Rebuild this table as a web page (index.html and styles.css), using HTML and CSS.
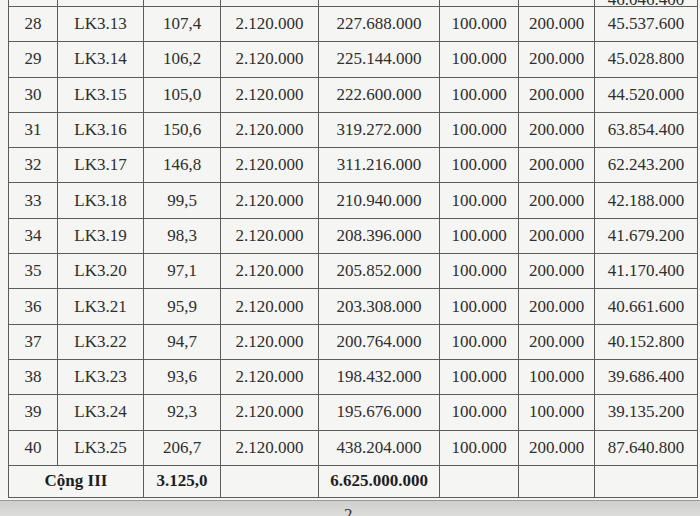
FILE: index.html
```html
<!DOCTYPE html>
<html lang="vi">
<head>
<meta charset="utf-8">
<title>Bảng LK3</title>
<link rel="stylesheet" href="styles.css">
</head>
<body>
<div class="page">
  <table class="grid">
    <colgroup>
      <col class="c1"><col class="c2"><col class="c3"><col class="c4">
      <col class="c5"><col class="c6"><col class="c7"><col class="c8">
    </colgroup>
    <tbody>
      <tr class="cut"><td></td><td></td><td></td><td></td><td></td><td></td><td></td><td class="low">46.046.400</td></tr>
      <tr><td>28</td><td>LK3.13</td><td>107,4</td><td>2.120.000</td><td>227.688.000</td><td>100.000</td><td>200.000</td><td>45.537.600</td></tr>
      <tr><td>29</td><td>LK3.14</td><td>106,2</td><td>2.120.000</td><td>225.144.000</td><td>100.000</td><td>200.000</td><td>45.028.800</td></tr>
      <tr><td>30</td><td>LK3.15</td><td>105,0</td><td>2.120.000</td><td>222.600.000</td><td>100.000</td><td>200.000</td><td>44.520.000</td></tr>
      <tr><td>31</td><td>LK3.16</td><td>150,6</td><td>2.120.000</td><td>319.272.000</td><td>100.000</td><td>200.000</td><td>63.854.400</td></tr>
      <tr><td>32</td><td>LK3.17</td><td>146,8</td><td>2.120.000</td><td>311.216.000</td><td>100.000</td><td>200.000</td><td>62.243.200</td></tr>
      <tr><td>33</td><td>LK3.18</td><td>99,5</td><td>2.120.000</td><td>210.940.000</td><td>100.000</td><td>200.000</td><td>42.188.000</td></tr>
      <tr><td>34</td><td>LK3.19</td><td>98,3</td><td>2.120.000</td><td>208.396.000</td><td>100.000</td><td>200.000</td><td>41.679.200</td></tr>
      <tr><td>35</td><td>LK3.20</td><td>97,1</td><td>2.120.000</td><td>205.852.000</td><td>100.000</td><td>200.000</td><td>41.170.400</td></tr>
      <tr><td>36</td><td>LK3.21</td><td>95,9</td><td>2.120.000</td><td>203.308.000</td><td>100.000</td><td>200.000</td><td>40.661.600</td></tr>
      <tr><td>37</td><td>LK3.22</td><td>94,7</td><td>2.120.000</td><td>200.764.000</td><td>100.000</td><td>200.000</td><td>40.152.800</td></tr>
      <tr><td>38</td><td>LK3.23</td><td>93,6</td><td>2.120.000</td><td>198.432.000</td><td>100.000</td><td>100.000</td><td>39.686.400</td></tr>
      <tr><td>39</td><td>LK3.24</td><td>92,3</td><td>2.120.000</td><td>195.676.000</td><td>100.000</td><td>100.000</td><td>39.135.200</td></tr>
      <tr><td>40</td><td>LK3.25</td><td>206,7</td><td>2.120.000</td><td>438.204.000</td><td>100.000</td><td>200.000</td><td>87.640.800</td></tr>
      <tr class="total"><td colspan="2">Cộng III</td><td>3.125,0</td><td></td><td>6.625.000.000</td><td></td><td></td><td></td></tr>
    </tbody>
  </table>
</div>
<div class="below"><span class="pno">2</span></div>
</body>
</html>
```

FILE: styles.css
```css
html, body {
  margin: 0;
  padding: 0;
  background: #d6d6d4;
}
body {
  width: 700px;
  height: 516px;
  overflow: hidden;
  font-family: "Liberation Serif", "Tinos", "Times New Roman", "DejaVu Serif", serif;
}
.page {
  height: 500px;
  overflow: hidden;
  background: #f5f5f3;
  border-bottom: 1px solid #9a9a98;
}
.grid {
  table-layout: fixed;
  border-collapse: collapse;
  width: 689px;
  margin: -29px 0 0 8px;
  color: #2e2e2e;
  font-family: "Liberation Serif", "Tinos", "Times New Roman", "DejaVu Serif", serif;
  font-size: 17px;
}
.c1 { width: 49px; }
.c2 { width: 86px; }
.c3 { width: 77px; }
.c4 { width: 98px; }
.c5 { width: 121px; }
.c6 { width: 79px; }
.c7 { width: 76px; }
.c8 { width: 103px; }
.grid td {
  font-family: "Liberation Serif", "Tinos", "Times New Roman", serif;
  border: 1px solid #5c5c5c;
  height: 34.3px;
  padding: 0;
  text-align: center;
  vertical-align: middle;
  white-space: nowrap;
  overflow: hidden;
}
.grid tr.cut td {
  height: 34px;
}
.grid td.low {
  vertical-align: bottom;
  line-height: 13px;
}
.grid tr.total td {
  height: 31px;
  font-weight: bold;
  color: #1e1e1e;
}
.below {
  height: 15px;
  position: relative;
  background: linear-gradient(#cfcfcd, #dcdcda);
}
.pno {
  position: absolute;
  left: 344px;
  top: 5px;
  font-size: 17px;
  line-height: 17px;
  color: #333;
  font-family: "Liberation Serif", serif;
}
```
